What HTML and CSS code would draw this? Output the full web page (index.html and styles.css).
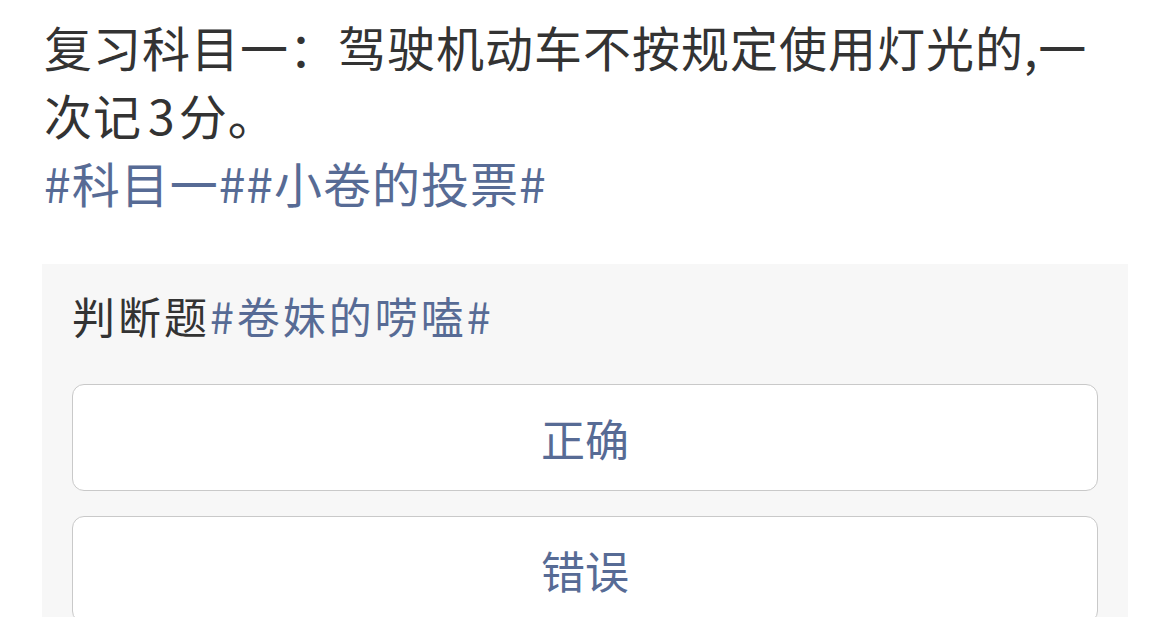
FILE: index.html
```html
<!DOCTYPE html>
<html lang="zh-CN">
<head>
<meta charset="utf-8">
<link rel="stylesheet" href="styles.css">
</head>
<body>
<div class="post">
  <p class="text">复习科目一：驾驶机动车不按规定使用灯光的,一次记<span class="num">3</span>分。<br><span class="tag">#科目一##小卷的投票#</span></p>
  <div class="vote">
    <div class="vote-title">判断题<span class="tag">#卷妹的唠嗑#</span></div>
    <div class="options">
      <div class="option">正确</div>
      <div class="option">错误</div>
    </div>
  </div>
</div>
</body>
</html>
```
FILE: styles.css
```css
html, body {
  margin: 0;
  padding: 0;
  background: #ffffff;
}
body {
  font-family: "Noto Sans CJK SC", "Noto Sans", sans-serif;
  color: #333333;
  overflow: hidden;
}
.post {
  padding: 12px 42px 0 42px;
}
.text {
  margin: 0 0 0 2px;
  font-size: 48px;
  line-height: 68px;
  letter-spacing: 1px;
  width: 1060px;
}
.num {
  margin: 0 3px 0 6px;
}
.tag {
  color: #576b95;
}
.vote {
  margin-top: 48px;
  background: #f7f7f7;
  padding: 23px 30px 0 30px;
}
.vote-title {
  font-size: 43px;
  line-height: 56px;
  letter-spacing: 3px;
}
.options {
  margin-top: 41px;
  display: flex;
  flex-direction: column;
  gap: 25px;
}
.option {
  height: 105px;
  background: #ffffff;
  border: 1px solid #c9c9c9;
  border-radius: 12px;
  display: flex;
  align-items: center;
  justify-content: center;
  font-size: 44px;
  color: #576b95;
}
```
